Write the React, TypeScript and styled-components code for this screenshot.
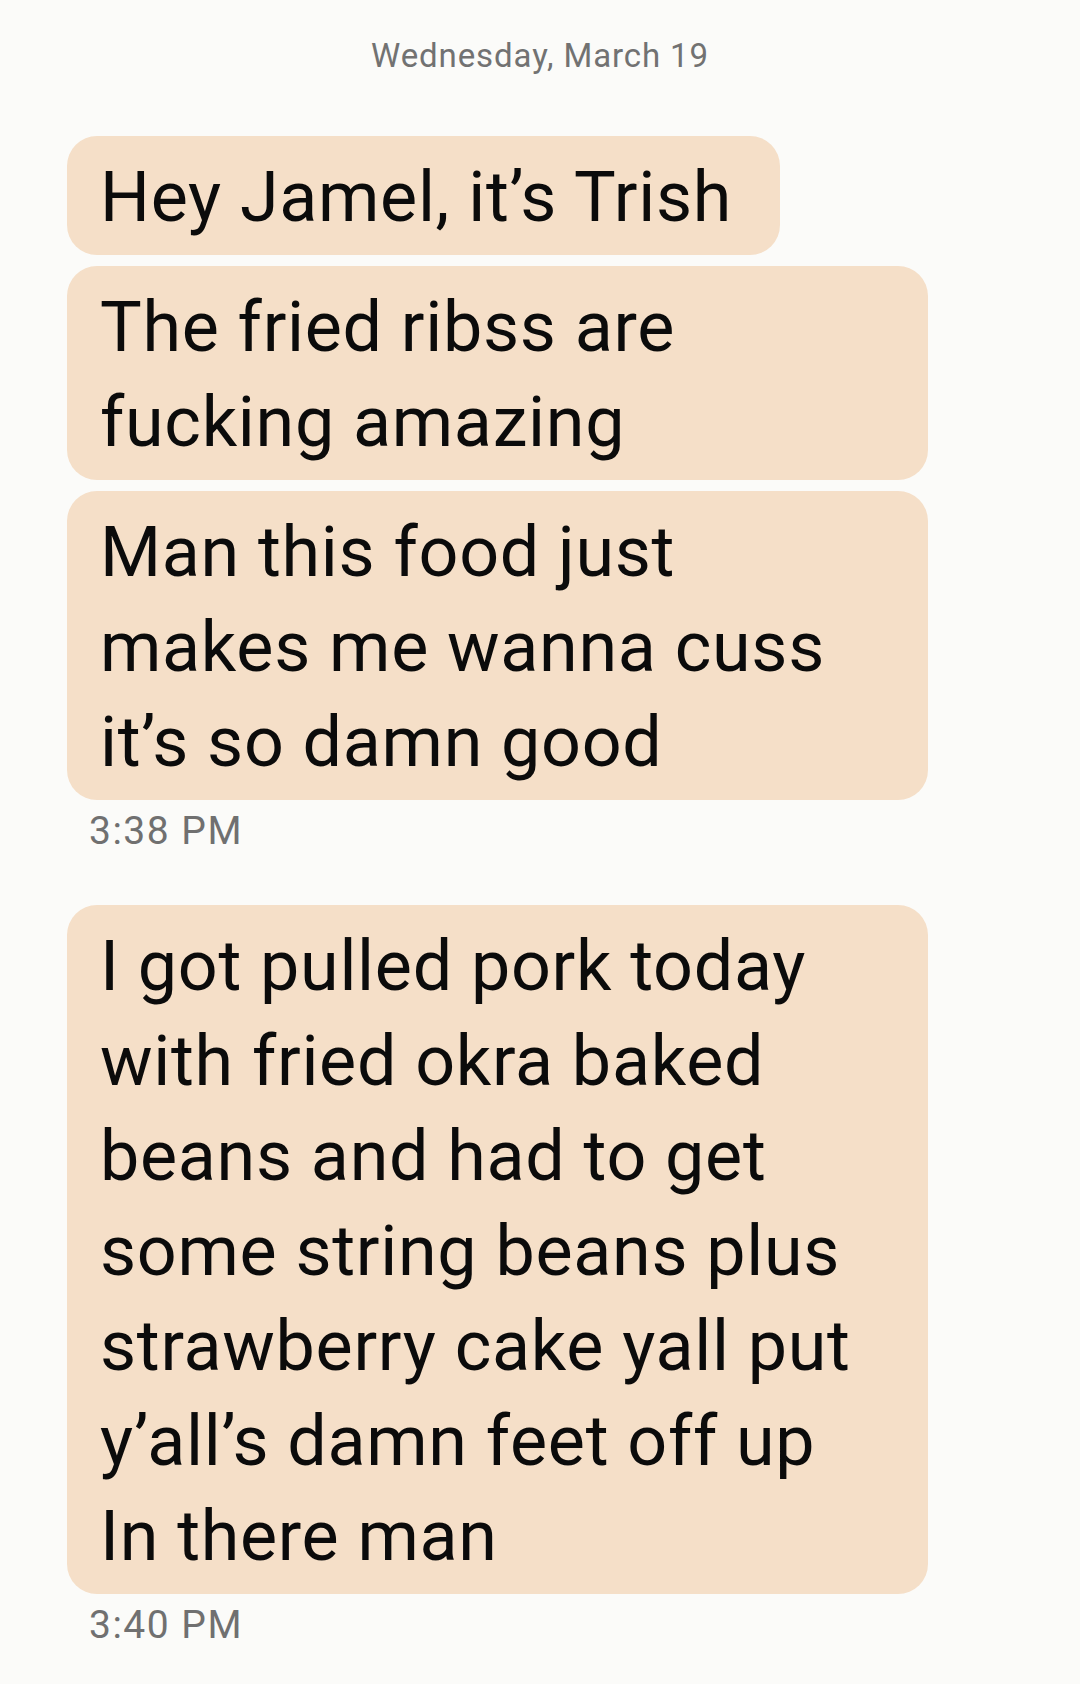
import React from "react";
import styled, { createGlobalStyle } from "styled-components";

const Global = createGlobalStyle`
  html, body { margin: 0; padding: 0; background: #fbfbf9; }
  body { font-family: Roboto, "Noto Sans", "Liberation Sans", sans-serif; }
`;

const Screen = styled.div`
  width: 1080px;
  min-height: 1684px;
  box-sizing: border-box;
  background: #fbfbf9;
  padding: 36px 0 0 67px;
  display: flex;
  flex-direction: column;
`;

const DateLabel = styled.div`
  align-self: stretch;
  margin-left: -67px;
  text-align: center;
  font-size: 33px;
  letter-spacing: 0.9px;
  line-height: 40px;
  color: #727272;
  margin-bottom: 60px;
`;

const Group = styled.div<{ $after: number }>`
  display: flex;
  flex-direction: column;
  align-items: flex-start;
  gap: 11px;
  margin-bottom: ${(p) => p.$after}px;
`;

const Bubble = styled.div<{ $full?: boolean }>`
  box-sizing: border-box;
  width: ${(p) => (p.$full ? "861px" : "fit-content")};
  background: #f5dfc8;
  color: #0b0b0b;
  border-radius: 30px;
  padding: 14px 48px 10px 33px;
  font-size: 70px;
  letter-spacing: 0.7px;
  line-height: 95px;
`;

const Line = styled.span`
  display: block;
  white-space: nowrap;
`;

const Time = styled.div`
  font-size: 39px;
  letter-spacing: 1.5px;
  line-height: 46px;
  color: #707070;
  padding-left: 22px;
  margin-top: -3px;
`;

type Msg = { lines: string[] };
type Block = { msgs: Msg[]; time: string; after: number };

const blocks: Block[] = [
  {
    msgs: [
      { lines: ["Hey Jamel, it\u2019s Trish"] },
      { lines: ["The fried ribss are", "fucking amazing"] },
      { lines: ["Man this food just", "makes me wanna cuss", "it\u2019s so damn good"] },
    ],
    time: "3:38 PM",
    after: 51,
  },
  {
    msgs: [
      {
        lines: [
          "I got pulled pork today",
          "with fried okra baked",
          "beans and had to get",
          "some string beans plus",
          "strawberry cake yall put",
          "y\u2019all\u2019s damn feet off up",
          "In there man",
        ],
      },
    ],
    time: "3:40 PM",
    after: 0,
  },
];

export default function App() {
  return (
    <>
      <Global />
      <Screen>
        <DateLabel>Wednesday, March 19</DateLabel>
        {blocks.map((b, i) => (
          <Group key={i} $after={b.after}>
            {b.msgs.map((m, j) => (
              <Bubble key={j} $full={m.lines.length > 1}>
                {m.lines.map((l, k) => (
                  <Line key={k}>{l}</Line>
                ))}
              </Bubble>
            ))}
            <Time>{b.time}</Time>
          </Group>
        ))}
      </Screen>
    </>
  );
}
